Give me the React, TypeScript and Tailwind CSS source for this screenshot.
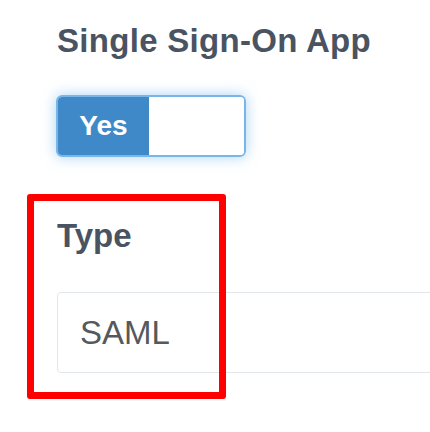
export default function App() {
  return (
    <div className="relative min-h-[432px] w-[430px] overflow-hidden bg-white font-['Liberation_Sans',Arial,sans-serif]">
      <div className="pl-[57px]">
        <h2 className="mt-[24px] whitespace-nowrap text-[33px] font-bold leading-[33px] tracking-[0.3px] text-[#4a5362]">Single Sign-On App</h2>

        <div className="-ml-px mt-[38px] flex h-[62px] w-[190px] overflow-hidden rounded-[6px] border-2 border-[#78b6ea] shadow-[0_0_14px_rgba(102,175,233,0.55)]">
          <div className="flex w-[91px] items-center justify-center bg-[#3f89c9] text-[28px] font-bold text-white">Yes</div>
          <div className="flex-1 bg-white" />
        </div>

        <div className="mt-[62px] text-[33px] font-bold leading-[33px] text-[#4a5362]">Type</div>

        <div className="mt-[40px] flex h-[81px] w-[420px] items-center rounded-[4px] border-[1.5px] border-[#e2e7ec] pl-[22px] text-[33px] text-[#55595e]">
          SAML
        </div>
      </div>

      <div className="pointer-events-none absolute left-[27px] top-[194px] h-[205px] w-[199px] rounded-[3px] border-[7px] border-[#ff0000]" />
    </div>
  );
}
